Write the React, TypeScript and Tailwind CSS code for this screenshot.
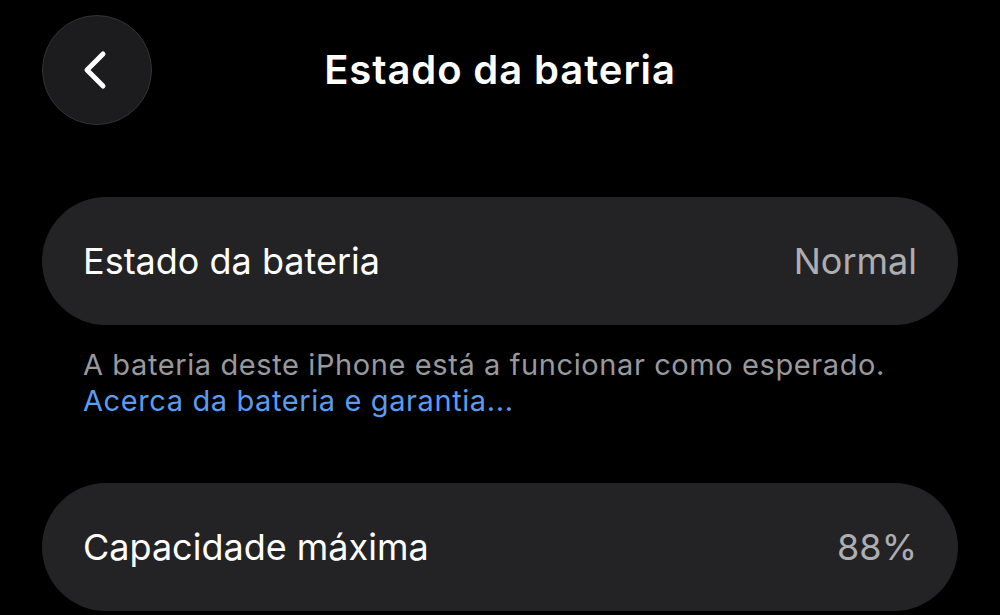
import React from "react";

function BackButton() {
  return (
    <button className="flex h-[110px] w-[110px] items-center justify-center rounded-full border border-[#333335] bg-[#1c1c1e]">
      <svg width="40" height="48" viewBox="0 0 40 48" fill="none">
        <path
          d="M26 8 L10 24 L26 40"
          stroke="white"
          strokeWidth="5"
          strokeLinecap="round"
          strokeLinejoin="round"
        />
      </svg>
    </button>
  );
}

function Row({ label, value }: { label: string; value: string }) {
  return (
    <div className="flex h-[128px] items-center justify-between rounded-full bg-[#232325] pl-[41px] pr-[41px]">
      <span className="text-[36px] text-white">{label}</span>
      <span className="text-[36px] text-[#aeaeb2]">{value}</span>
    </div>
  );
}

export default function App() {
  return (
    <div
      className="h-[615px] w-[1000px] overflow-hidden bg-black"
      style={{ fontFamily: "Inter, 'Liberation Sans', sans-serif" }}
    >
      <div className="relative flex h-[140px] items-center px-[42px]">
        <BackButton />
        <h1 className="pointer-events-none absolute left-0 right-0 text-center text-[40px] font-semibold tracking-[0.9px] text-white">
          Estado da bateria
        </h1>
      </div>

      <div className="mt-[57px] px-[42px]">
        <Row label="Estado da bateria" value="Normal" />
        <div className="px-[41px] pt-[22px] text-[29px] leading-[36px] tracking-[0.6px]">
          <p className="text-[#98989d]">
            A bateria deste iPhone está a funcionar como esperado.
          </p>
          <p className="text-[#5b9cf0]">Acerca da bateria e garantia...</p>
        </div>
        <div className="mt-[64px]">
          <Row label="Capacidade máxima" value="88%" />
        </div>
      </div>
    </div>
  );
}
